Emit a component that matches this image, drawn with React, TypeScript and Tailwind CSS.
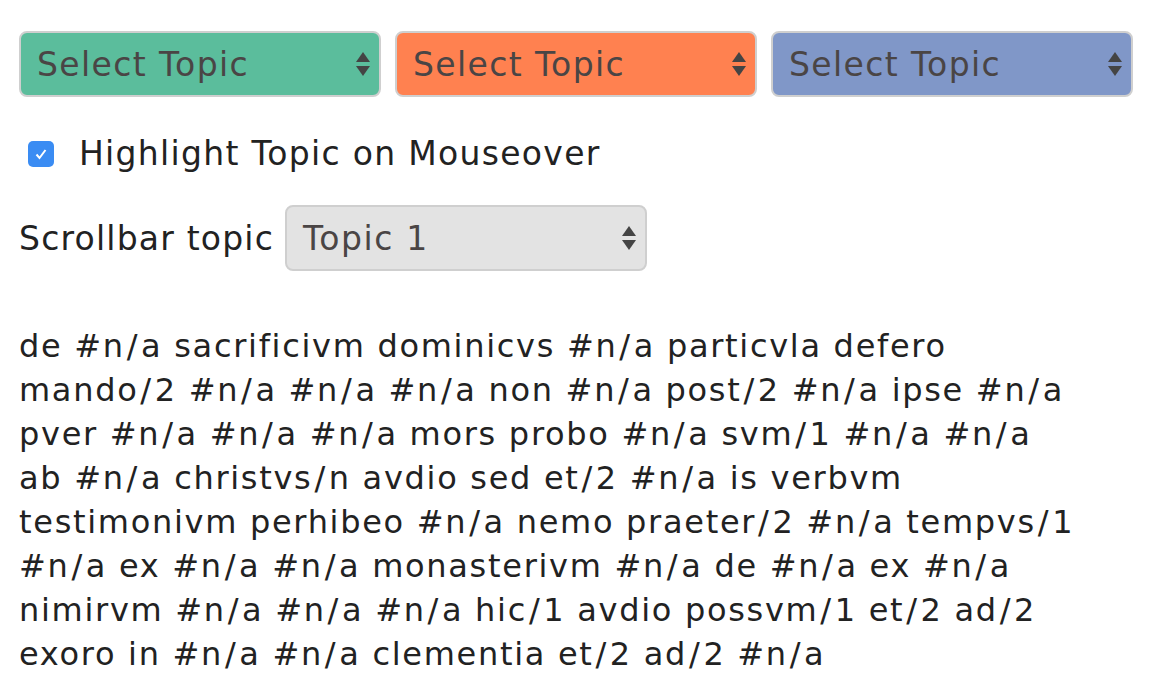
const Arrows = () => (
  <svg width="16" height="28" viewBox="0 0 16 28" className="shrink-0">
    <path d="M8 2 L15 12 L1 12 Z" fill="#444" />
    <path d="M1 16 L15 16 L8 26 Z" fill="#444" />
  </svg>
);

const FakeSelect = (props: { label: string; bg: string }) => (
  <div
    className={`${props.bg} w-[362px] h-[66px] rounded-[8px] border-2 border-[#cfcfcf] flex items-center justify-between pl-[16px] pr-[8px]`}
  >
    <span className="text-[#4a4545] text-[33px] tracking-[1.4px] leading-none">{props.label}</span>
    <Arrows />
  </div>
);

// wrapped the same way the original column breaks
const lines = [
  "de #n/a sacrificivm dominicvs #n/a particvla defero",
  "mando/2 #n/a #n/a #n/a non #n/a post/2 #n/a ipse #n/a",
  "pver #n/a #n/a #n/a mors probo #n/a svm/1 #n/a #n/a",
  "ab #n/a christvs/n avdio sed et/2 #n/a is verbvm",
  "testimonivm perhibeo #n/a nemo praeter/2 #n/a tempvs/1",
  "#n/a ex #n/a #n/a monasterivm #n/a de #n/a ex #n/a",
  "nimirvm #n/a #n/a #n/a hic/1 avdio possvm/1 et/2 ad/2",
  "exoro in #n/a #n/a clementia et/2 ad/2 #n/a",
];

// the slash is wider in the original face
const Line = ({ text }: { text: string }) => {
  const parts = text.split("/");
  return (
    <div className="whitespace-nowrap">
      {parts.map((p, i) => (
        <span key={i}>
          {p}
          {i < parts.length - 1 && <span className="px-[1.9px]">/</span>}
        </span>
      ))}
    </div>
  );
};

export default function App() {
  return (
    <div className="w-[1152px] h-[692px] overflow-hidden bg-white px-[19px] pt-[31px] text-[#222] font-['DejaVu_Sans',sans-serif]">
      <div className="flex gap-[14px]">
        <FakeSelect label="Select Topic" bg="bg-[#5bbd9c]" />
        <FakeSelect label="Select Topic" bg="bg-[#ff8150]" />
        <FakeSelect label="Select Topic" bg="bg-[#8097c8]" />
      </div>

      <div className="flex items-center mt-[40px] ml-[9px] gap-[25px]">
        <div className="w-[26px] h-[26px] rounded-[5px] bg-[#3a8cf3] flex items-center justify-center">
          <svg width="16" height="16" viewBox="0 0 16 16">
            <path d="M3.5 8.5 L6.5 12 L12.5 4" stroke="white" strokeWidth="2" fill="none" />
          </svg>
        </div>
        <span className="text-[33px] tracking-[1.3px] leading-none">Highlight Topic on Mouseover</span>
      </div>

      <div className="flex items-center mt-[35px] gap-[11px]">
        <span className="text-[33px] tracking-[1.2px] leading-none">Scrollbar topic</span>
        <div className="w-[362px] h-[66px] rounded-[8px] border-2 border-[#cfcfcf] bg-[#e3e3e3] flex items-center justify-between pl-[16px] pr-[8px]">
          <span className="text-[#4a4545] text-[33px] tracking-[1.6px] leading-none">Topic 1</span>
          <Arrows />
        </div>
      </div>

      <div className="mt-[53px] text-[32px] tracking-[1.7px] leading-[44px]">
        {lines.map((l, i) => (
          <Line key={i} text={l} />
        ))}
      </div>
    </div>
  );
}
